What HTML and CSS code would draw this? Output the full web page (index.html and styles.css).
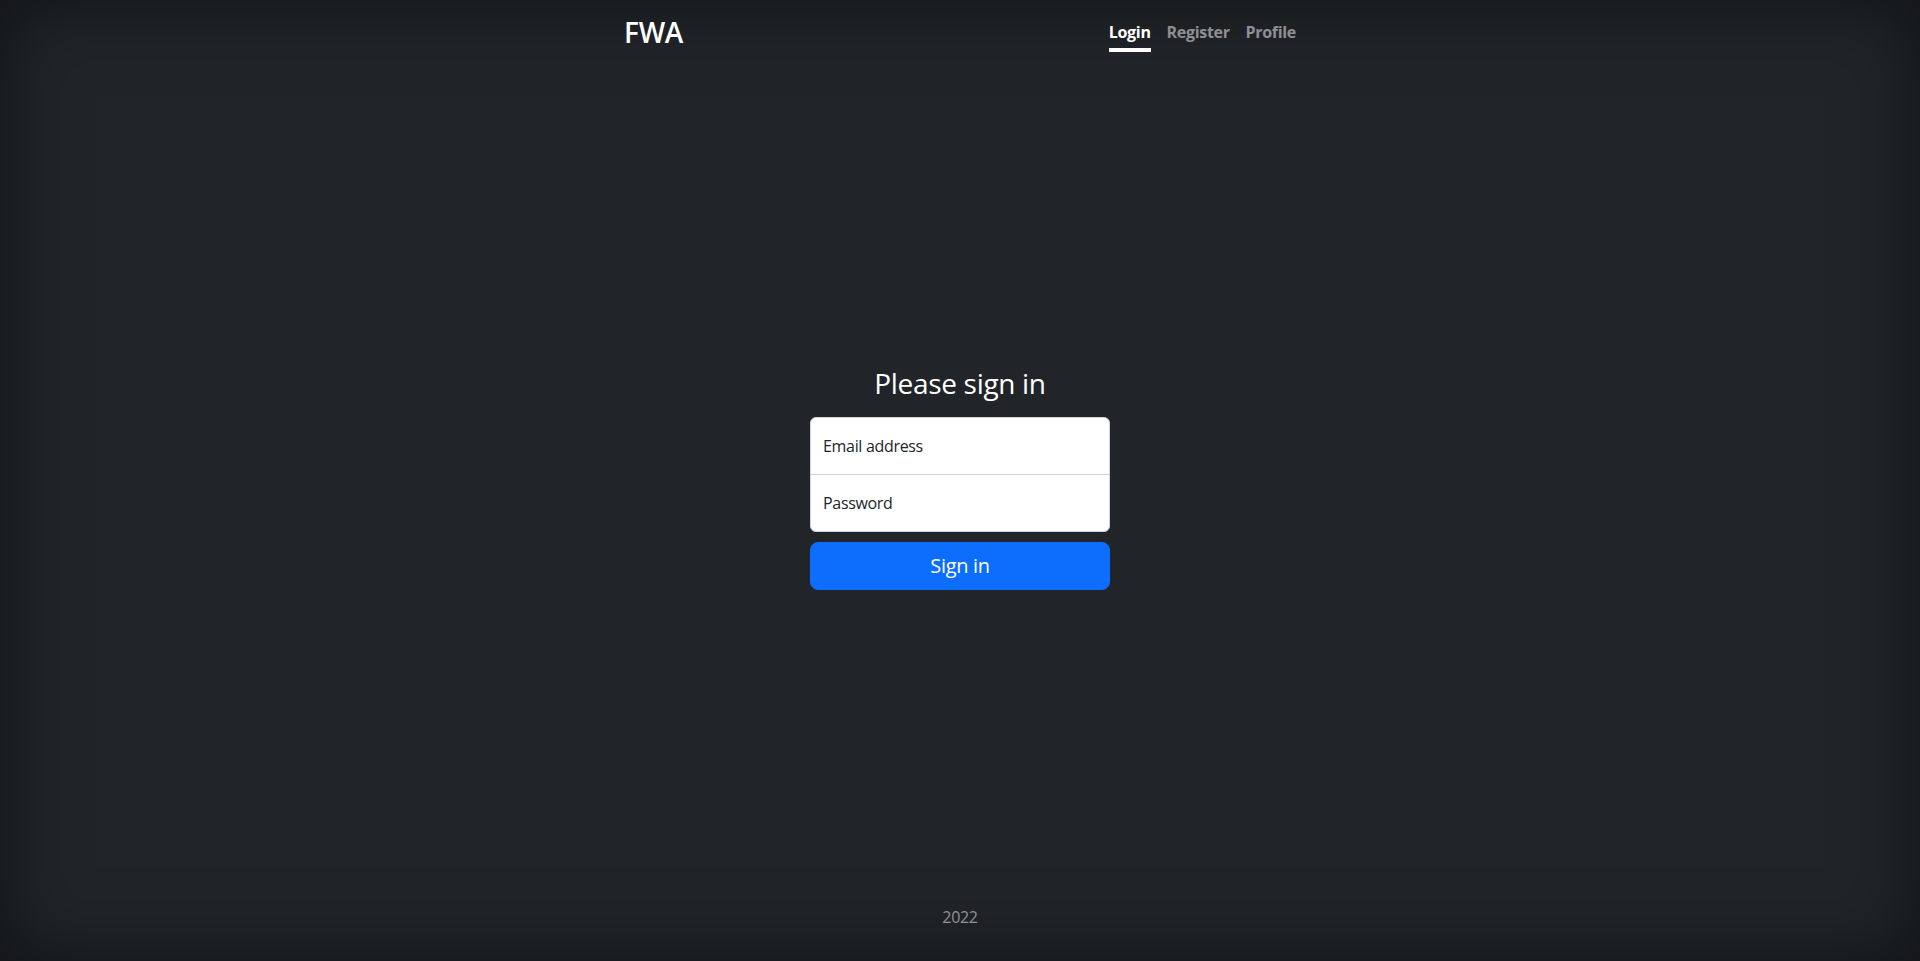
FILE: index.html
```html
<!DOCTYPE html>
<html lang="en">
<head>
<meta charset="utf-8">
<title>FWA</title>
<link rel="stylesheet" href="styles.css">
</head>
<body>
<div class="cover">
  <header class="masthead">
    <h3 class="brand">FWA</h3>
    <nav class="nav">
      <a class="nav-link active" href="#">Login</a>
      <a class="nav-link" href="#">Register</a>
      <a class="nav-link" href="#">Profile</a>
    </nav>
  </header>
  <main class="main">
    <form class="signin">
      <h1 class="title">Please sign in</h1>
      <div class="field field-email"><span class="label">Email address</span></div>
      <div class="field field-password"><span class="label">Password</span></div>
      <button class="btn" type="button">Sign in</button>
    </form>
  </main>
  <footer class="footer">
    <p>2022</p>
  </footer>
</div>
</body>
</html>
```
FILE: styles.css
```css
* { box-sizing: border-box; }
html, body { height: 100%; }
body {
  margin: 0;
  display: flex;
  background: #212529;
  color: #fff;
  text-align: center;
  font-family: "Open Sans", "Noto Sans", sans-serif;
  font-size: 16px;
  line-height: 1.5;
  letter-spacing: -0.02em;
  box-shadow: inset 0 0 5rem rgba(0,0,0,.5);
}
.cover {
  width: 704px;
  margin: 0 auto;
  padding: 16px;
  display: flex;
  flex-direction: column;
  height: 100%;
}
.masthead {
  display: flex;
  justify-content: space-between;
  align-items: flex-start;
  margin-bottom: auto;
}
.brand {
  margin: 0;
  font-size: 28px;
  font-weight: 600;
  line-height: 1.2;
  letter-spacing: -0.01em;
}
.nav { display: flex; }
.nav-link {
  padding: 4px 0;
  font-weight: 700;
  color: rgba(255,255,255,.5);
  text-decoration: none;
  border-bottom: 4px solid transparent;
}
.nav-link + .nav-link { margin-left: 16px; }
.nav-link.active { color: #fff; border-bottom-color: #fff; }
.main { padding: 0 16px; }
.signin {
  width: 330px;
  padding: 15px;
  margin: 0 auto;
}
.title {
  margin: 0 0 16px;
  font-size: 28px;
  font-weight: 400;
  line-height: 1.2;
}
.field {
  height: 58px;
  background: #fff;
  border: 1px solid #ced4da;
  text-align: left;
  padding: 16px 12px;
  color: #212529;
}
.field-email { border-radius: 6px 6px 0 0; margin-bottom: -1px; }
.field-password { border-radius: 0 0 6px 6px; margin-bottom: 10px; }
.label { font-size: 16px; line-height: 24px; display: block; }
.btn {
  display: block;
  width: 100%;
  height: 48px;
  border: 1px solid #0d6efd;
  background: #0d6efd;
  color: #fff;
  border-radius: 8px;
  font-family: inherit;
  font-size: 20px;
  line-height: 1.5;
  letter-spacing: inherit;
  padding: 8px 16px;
}
.footer { margin-top: auto; color: rgba(255,255,255,.5); }
.footer p { margin: 0 0 16px; }
```
